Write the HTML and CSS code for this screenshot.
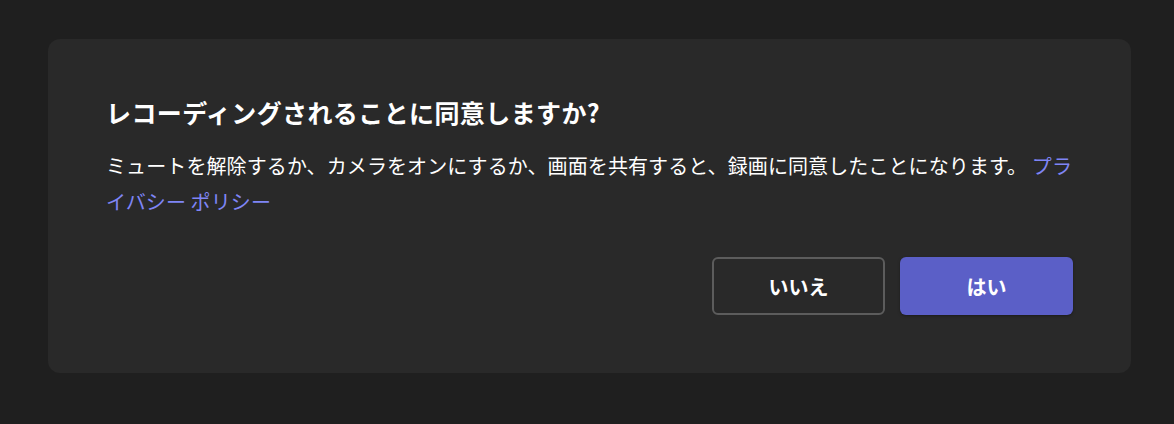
FILE: index.html
```html
<!DOCTYPE html>
<html lang="ja">
<head>
    <meta charset="UTF-8">
    <title>レコーディングの同意</title>
    <link rel="stylesheet" href="styles.css">
</head>
<body>
<div class="dialog">
    <h2 class="dialog-title">レコーディングされることに同意しますか?</h2>
    <p class="dialog-text">ミュートを解除するか、カメラをオンにするか、画面を共有すると、録画に同意したことになります。 <a href="#" class="link">プライバシー ポリシー</a></p>
    <div class="actions">
        <button class="btn btn-secondary">いいえ</button>
        <button class="btn btn-primary">はい</button>
    </div>
</div>
</body>
</html>
```

FILE: styles.css
```css
body {
    margin: 0;
    padding: 39px 0 0 48px;
    background: #1f1f1f;
    font-family: "Noto Sans CJK JP", "Noto Sans", sans-serif;
    color: #ffffff;
}
.dialog {
    width: 1083px;
    box-sizing: border-box;
    padding: 55px 58px 58px 58px;
    background: #292929;
    border-radius: 12px;
}
.dialog-title {
    margin: 0 0 18px 0;
    font-size: 25px;
    font-weight: 700;
    line-height: 36px;
    letter-spacing: 0.4px;
}
.dialog-text {
    margin: 0;
    font-size: 20px;
    line-height: 36px;
    letter-spacing: 0.1px;
}
.link {
    color: #7f85f5;
    text-decoration: none;
}
.actions {
    display: flex;
    justify-content: flex-end;
    gap: 15px;
    margin-top: 37px;
}
.btn {
    width: 173px;
    height: 58px;
    border-radius: 6px;
    font-family: inherit;
    font-size: 20px;
    font-weight: 700;
    color: #ffffff;
    cursor: pointer;
}
.btn-secondary {
    background: #292929;
    border: 2px solid #5c5c5c;
}
.btn-primary {
    background: #5b5fc7;
    border: none;
    box-shadow: 0 1px 3px rgba(0, 0, 0, 0.35);
}
```
